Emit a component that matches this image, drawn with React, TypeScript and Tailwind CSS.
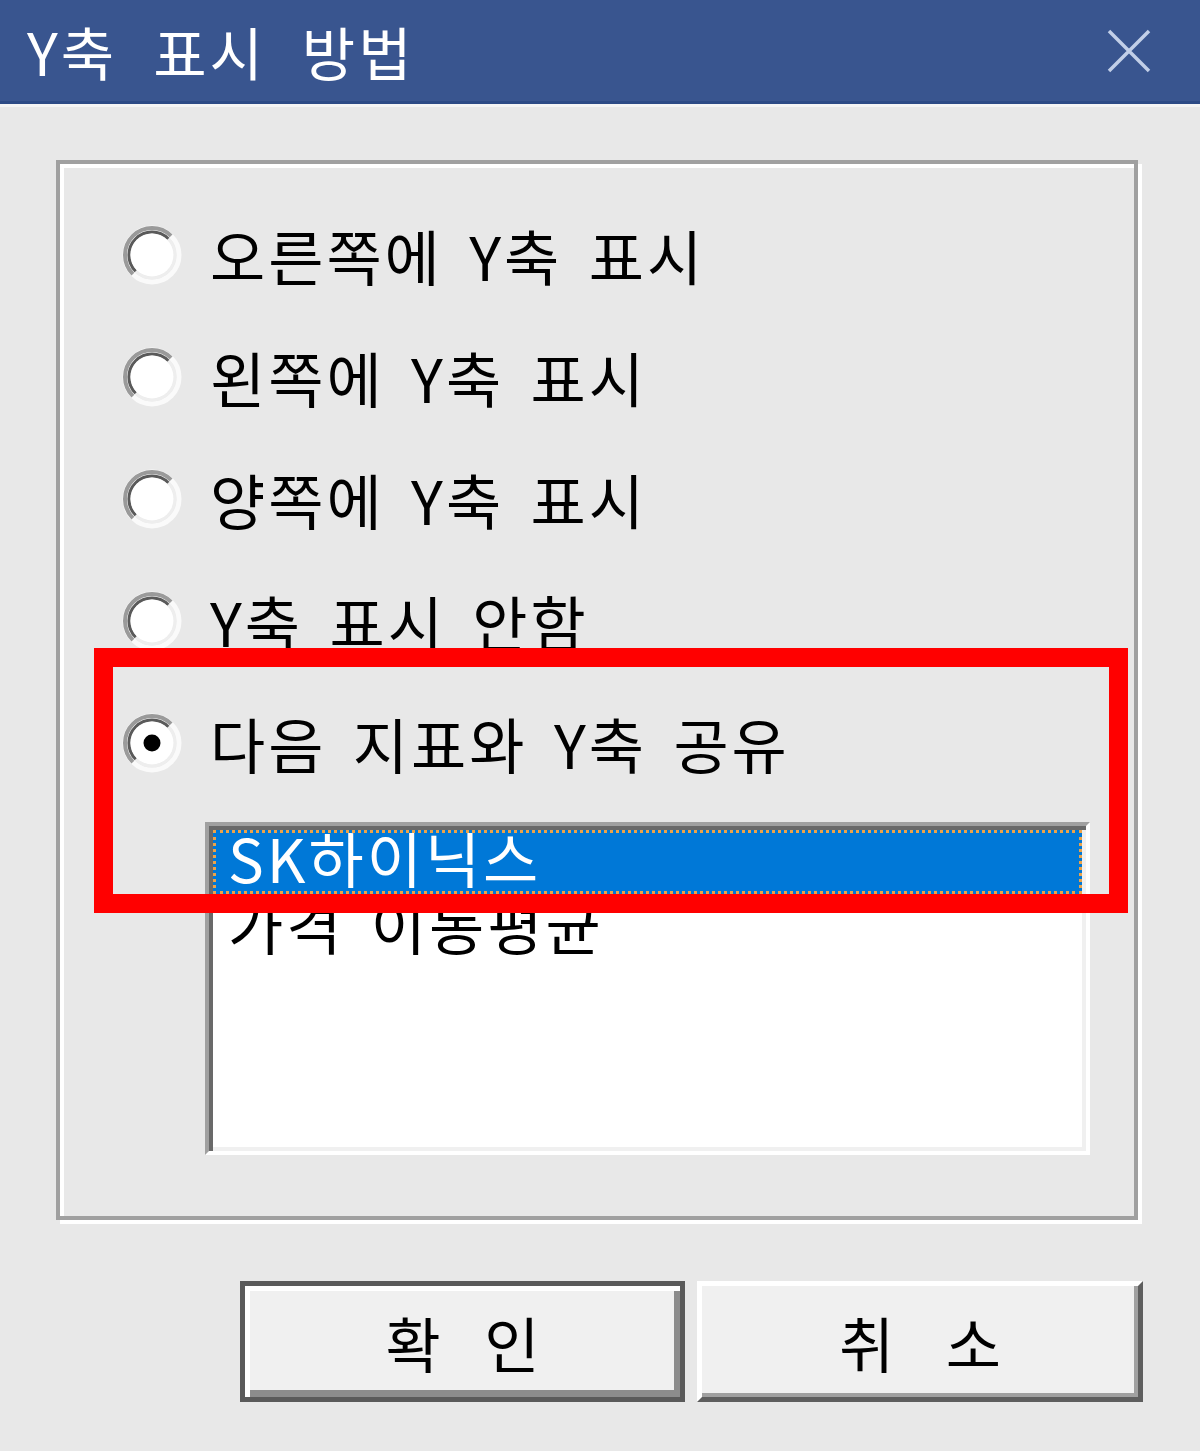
import React from "react";

function Radio({ checked }: { checked?: boolean }) {
  return (
    <svg width="60" height="60" viewBox="0 0 60 60" className="shrink-0">
      <circle cx="30" cy="30" r="27" fill="none" stroke="#fafafa" strokeWidth="5" />
      <path d="M 10.9 49.1 A 27 27 0 0 1 49.1 10.9" fill="none" stroke="#9a9a9a" strokeWidth="4" />
      <circle cx="30" cy="30" r="23" fill="none" stroke="#eeeeee" strokeWidth="3" />
      <path d="M 13.7 46.3 A 23 23 0 0 1 46.3 13.7" fill="none" stroke="#5a5a5a" strokeWidth="3" />
      <circle cx="30" cy="30" r="21.5" fill="#ffffff" />
      {checked && <circle cx="30" cy="30" r="8.5" fill="#000000" />}
    </svg>
  );
}

const rows = [
  { label: "오른쪽에 Y축 표시", checked: false },
  { label: "왼쪽에 Y축 표시", checked: false },
  { label: "양쪽에 Y축 표시", checked: false },
  { label: "Y축 표시 안함", checked: false },
  { label: "다음 지표와 Y축 공유", checked: true },
];

export default function App() {
  return (
    <div className="relative w-[1200px] h-[1451px] overflow-hidden bg-[#e8e8e8] font-['Noto_Sans_CJK_KR','Noto_Sans',sans-serif]">
      {/* Title bar */}
      <div className="flex h-[104px] items-center justify-between border-b-[3px] border-[#2c4a85] bg-[#39558f] pl-[27px] pr-[48px]">
        <span className="text-[58px] leading-none tracking-[3px] text-white [word-spacing:20px]">Y축 표시 방법</span>
        <svg width="46" height="46" viewBox="0 0 46 46">
          <path d="M3 3 L43 43 M43 3 L3 43" stroke="#c2cfe8" strokeWidth="3.5" />
        </svg>
      </div>
      <div className="h-[3px] bg-[#f4f4f4]" />

      {/* Group box */}
      <div className="ml-[56px] mt-[53px] h-[1060px] w-[1082px] border-[4px] border-[#a0a0a0] pl-[62px] pt-[30px] shadow-[inset_4px_4px_0_#ffffff,4px_4px_0_#ffffff]">
        {rows.map((r) => (
          <div key={r.label} className="flex h-[122px] items-center gap-[28px]">
            <Radio checked={r.checked} />
            <span className="text-[60px] leading-none tracking-[3px] text-black [word-spacing:10px]">{r.label}</span>
          </div>
        ))}

        {/* List box */}
        <div className="ml-[83px] mt-[18px] h-[333px] w-[885px] border-[4px] border-t-[#a0a0a0] border-l-[#a0a0a0] border-r-[#ffffff] border-b-[#ffffff] bg-white p-[4px] shadow-[inset_4px_4px_0_#696969,inset_-4px_-4px_0_#f0f0f0]">
          <div className="h-full overflow-hidden">
            <div className="h-[64px] overflow-hidden border-[3px] border-dotted border-[#eba34a] bg-[#0078d7] pl-[12px]">
              <div className="-mt-[6px] text-[60px] leading-none tracking-[3px] text-white">SK하이닉스</div>
            </div>
            <div className="h-[64px] overflow-hidden pl-[15px]">
              <div className="mt-[0px] text-[60px] leading-none tracking-[3px] text-black [word-spacing:10px]">가격 이동평균</div>
            </div>
          </div>
        </div>
      </div>

      {/* Buttons */}
      <div className="ml-[240px] mt-[61px] flex gap-[12px]">
        <div className="flex h-[121px] w-[445px] items-center justify-center border-[5px] border-[#5a5a5a] bg-[#f0f0f0] shadow-[inset_5px_5px_0_#ffffff,inset_-6px_-7px_0_#8c8c8c]">
          <span className="text-[60px] leading-none text-black [word-spacing:30px]">확 인</span>
        </div>
        <div className="flex h-[121px] w-[446px] items-center justify-center border-[5px] border-t-[#ffffff] border-l-[#ffffff] border-r-[#5e5e5e] border-b-[#5e5e5e] bg-[#f0f0f0] shadow-[inset_-4px_-4px_0_#a0a0a0]">
          <span className="text-[60px] leading-none text-black [word-spacing:38px]">취 소</span>
        </div>
      </div>

      {/* Red highlight annotation */}
      <div className="pointer-events-none absolute left-[94px] top-[648px] h-[265px] w-[1034px] border-[19px] border-[#ff0000]" />
    </div>
  );
}
